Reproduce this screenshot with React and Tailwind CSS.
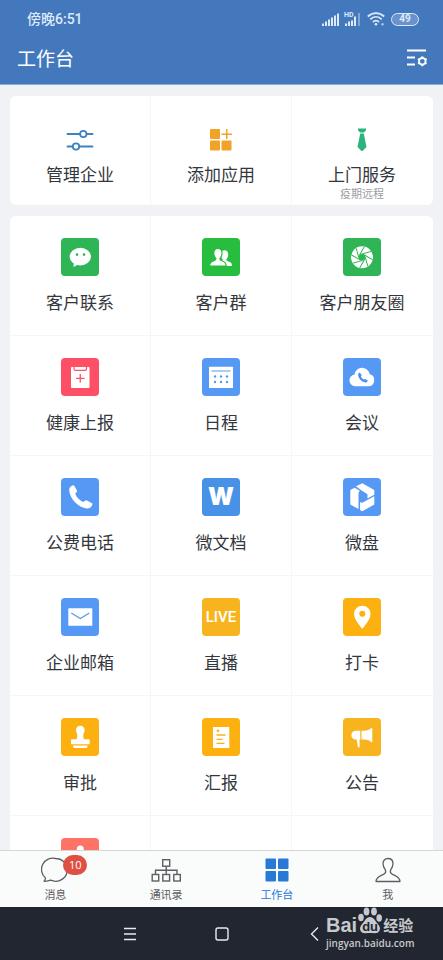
import React from "react";

function Tile({ color, children }) {
  return (
    <svg viewBox="0 0 38 38" className={`size-[38px] shrink-0 rounded ${color}`} fill="#fff" aria-hidden="true">
      {children}
    </svg>
  );
}

const PERSON =
  "M7.6 28c0-3 1-4 3.8-5 2-.8 2.6-1.200 2.600-2.200-1.500-1.500-2.200-3.500-2.200-5.800 0-2.900 1.700-4.600 4.100-4.600s4.100 1.700 4.100 4.600c0 2.300-.7 4.300-2.200 5.800 0 1 .6 1.400 2.600 2.200 2.800 1 3.800 2 3.800 5z";

function ChatIcon() {
  return (
    <Tile color="bg-[#2fb555]">
      <ellipse cx="19.300" cy="18.600" rx="10.700" ry="8.800" />
      <path d="M13 24l-.6 5 5-2.500z" />
      <circle cx="16" cy="16.600" r="1.300" fill="#2fb555" />
      <circle cx="23" cy="16.600" r="1.300" fill="#2fb555" />
    </Tile>
  );
}

function GroupIcon() {
  return (
    <Tile color="bg-[#27be3f]">
      <path d={PERSON} transform="translate(8.200 2.800) scale(.9)" />
      <path d={PERSON} stroke="#27be3f" strokeWidth="1.200" />
      <path d="M5 28h21v2H5z" fill="#27be3f" />
    </Tile>
  );
}

function MomentsIcon() {
  return (
    <Tile color="bg-[#2fb555]">
      <circle cx="19" cy="19.300" r="11" />
      <circle cx="19" cy="19.300" r="3.500" fill="#2fb555" />
      <g stroke="#2fb555" strokeWidth="1">
        {[0, 45, 90, 135, 180, 225, 270, 315].map((a) => (
          <path key={a} d="M19 16l9-2.500" transform={`rotate(${a} 19 19.300)`} />
        ))}
      </g>
    </Tile>
  );
}

function HealthIcon() {
  return (
    <Tile color="bg-[#fd5067]">
      <rect x="10" y="9" width="18.500" height="21" rx="1" />
      <path d="M13 8.500v2c0 1.200.7 1.900 1.900 1.900h8.700c1.200 0 1.900-.7 1.900-1.900v-2" fill="none" stroke="#fd5067" strokeWidth="1.200" />
      <path d="M19.250 16v8.600M14.950 20.300h8.600" stroke="#fd5067" strokeWidth="1.300" />
    </Tile>
  );
}

function CalendarIcon() {
  return (
    <Tile color="bg-[#5699f4]">
      <rect x="7" y="8.700" width="24" height="21.300" rx=".5" />
      <path d="M9.500 13h19" stroke="#5699f4" strokeWidth="1.200" />
      {[13, 19, 25].map((x) => (
        <g key={x} fill="#5699f4">
          <circle cx={x} cy="18.500" r="1.200" />
          <circle cx={x} cy="24" r="1.200" />
        </g>
      ))}
    </Tile>
  );
}

function MeetingIcon() {
  return (
    <Tile color="bg-[#5699f4]">
      <path d="M13 28.300a6 6 0 0 1-1.500-11.900 7.600 7.600 0 0 1 15-.3 6.200 6.200 0 0 1-1 12.200z" />
      <path d="M15.300 15.600l1.500-1 1.900 2.700-.8 1.200c.7 1.400 1.700 2.400 3.200 3.100l1.300-.7 2.500 1.900-1.200 1.500c-4.500 1-9.500-4.500-8.400-8.700z" fill="#4d8ff0" />
    </Tile>
  );
}

function PhoneIcon() {
  return (
    <Tile color="bg-[#5699f4]">
      <path d="M8.200 12c0-2.300 1.500-4 3.800-4.700.6-.2 1.100 0 1.400.6l2.500 4.500c.3.600.2 1-.2 1.500L14.200 15.700c1.600 3.800 4.400 6.500 7.800 8.300l2.500-1.600c.5-.3.900-.3 1.400 0l5 2.800c.6.3.8.8.5 1.400-.9 2.600-3 4.100-5.600 3.900C17.400 29.800 8.600 20.500 8.200 12z" />
    </Tile>
  );
}

function DriveIcon() {
  return (
    <Tile color="bg-[#5699f4]">
      <path d="M7.300 12l4.300-2.300 5.200 3-1.300 2V31l-8.200-4.600z" />
      <path d="M13 8.200l6.300-3 12 6.900v4.700L24.500 20.500v-4.300l-6.200-3.900z" />
      <path d="M31.300 18.300v8.100l-12 6.900-2.300-1.200v-7.800l2.300.4z" />
    </Tile>
  );
}

function MailIcon() {
  return (
    <Tile color="bg-[#5699f4]">
      <rect x="7.300" y="10.300" width="24" height="17.400" rx=".5" />
      <path d="M10.300 15l9 5.500 9-5.500" fill="none" stroke="#5699f4" strokeWidth="1.300" />
    </Tile>
  );
}

function PinIcon() {
  return (
    <Tile color="bg-[#fcb110]">
      <path fillRule="evenodd" d="M19.300 7.700a8.200 8.200 0 0 1 8.200 8.200c0 5-4.200 9.600-8.200 14.800-4-5.200-8.200-9.800-8.200-14.800a8.200 8.200 0 0 1 8.200-8.200zm0 5a3 3 0 1 0 0 6 3 3 0 0 0 0-6z" />
    </Tile>
  );
}

function StampIcon() {
  return (
    <Tile color="bg-[#fcb110]">
      <path d="M19.300 7.700c2.600 0 4.300 1.800 4.300 4.200 0 2.200-1.300 3.400-1.300 5.500 0 2 .3 3.600 1 3.800h4c.9 0 1.400.5 1.400 1.400v3.700H10v-3.700c0-.9.500-1.400 1.400-1.400h3.900c.7-.2 1-1.800 1-3.800 0-2.100-1.300-3.300-1.300-5.500 0-2.400 1.700-4.200 4.300-4.200z" />
      <path d="M11.800 27.600h15l-1 2.300h-13z" />
    </Tile>
  );
}

function ReportIcon() {
  return (
    <Tile color="bg-[#fcb110]">
      <rect x="11" y="9" width="16.300" height="21" />
      <circle cx="16" cy="12.700" r="1.300" fill="#fcb110" />
      <path d="M14.500 17h9M14.500 21.300h6M14.500 25.300h8" stroke="#fcb110" strokeWidth="1.300" />
    </Tile>
  );
}

function HornIcon() {
  return (
    <Tile color="bg-[#f7b41f]">
      <path d="M17.300 12.700v8.900h-.7v7.700h-1.700l-1.200-7.700h-.9a4.400 4.400 0 0 1 0-8.900z" />
      <path d="M18.500 12.700h2.500c3.500 0 6-1.300 7.500-2.700h.8v14.300h-.8c-1.500-1.400-4-2.700-7.500-2.700h-2.500z" />
    </Tile>
  );
}

function CoralIcon() {
  return (
    <Tile color="bg-[#fd7466]">
      <circle cx="19.300" cy="11" r="3.500" />
      <path d="M11 28c0-8 3-12 8.300-12s8.300 4 8.300 12z" />
    </Tile>
  );
}

function LetterTile({ color, text, children }) {
  return (
    <span className={`flex size-[38px] shrink-0 items-center justify-center rounded text-white ${color} ${text}`}>
      {children}
    </span>
  );
}

const APPS = [
  ["客户联系", <ChatIcon />],
  ["客户群", <GroupIcon />],
  ["客户朋友圈", <MomentsIcon />],
  ["健康上报", <HealthIcon />],
  ["日程", <CalendarIcon />],
  ["会议", <MeetingIcon />],
  ["公费电话", <PhoneIcon />],
  ["微文档", <LetterTile color="bg-[#4791e6]" text="font-['Inter',sans-serif] text-2xl font-black">W</LetterTile>],
  ["微盘", <DriveIcon />],
  ["企业邮箱", <MailIcon />],
  ["直播", <LetterTile color="bg-[#f7b41f]" text="font-['Roboto',sans-serif] text-[15px] font-medium">LIVE</LetterTile>],
  ["打卡", <PinIcon />],
  ["审批", <StampIcon />],
  ["汇报", <ReportIcon />],
  ["公告", <HornIcon />],
  ["", <CoralIcon />],
  ["", null],
  ["", null],
];

function SignalIcon() {
  return (
    <svg viewBox="0 0 17 13" className="h-[13px] w-[17px]" fill="#dceafb" aria-hidden="true">
      <path d="M0 10.500h2V13H0zM3 8.500h2V13H3zM6 6.500h2V13H6zM9 4.500h2V13H9zM12 2.500h2V13h-2zM15 .5h2V13h-2z" />
    </svg>
  );
}

function StatusBar() {
  return (
    <div className="flex h-[38px] items-center justify-between pr-6 pl-[27px] text-[#dceafb]">
      <span className="font-['Roboto','Noto_Sans_CJK_SC',sans-serif] text-sm font-medium">傍晚6:51</span>
      <div className="flex items-center gap-[5px]">
        <SignalIcon />
        <div className="relative h-[13px] w-4">
          <svg viewBox="0 0 16 13" className="h-[13px] w-4" fill="#dceafb" aria-hidden="true">
            <path d="M1 10.500h2V13H1zM4 8.500h2V13H4zM7 7.500h2V13H7zM10 3.500h2V13h-2z" />
            <path d="M14 0h2v13h-2z" opacity=".4" />
          </svg>
          <span className="absolute -top-px left-0 font-['Roboto',sans-serif] text-[7px] leading-[6px] font-bold">HD</span>
        </div>
        <svg viewBox="0 0 18 14" className="ml-0.5 h-3.5 w-[18px]" fill="none" stroke="#dceafb" strokeWidth="1.800" aria-hidden="true">
          <path d="M.8 4.500c5-4.500 11.400-4.500 16.400 0M3.300 7.300c3.400-3.200 8-3.200 11.400 0M5.900 10c2-1.800 4.200-1.800 6.200 0" />
          <circle cx="9" cy="12.300" r="1.300" fill="#dceafb" stroke="none" />
          <circle cx="15.500" cy="12.300" r="1.200" fill="#dceafb" stroke="none" opacity=".7" />
        </svg>
        <span className="ml-px flex h-[13px] w-7 items-center justify-center rounded-full border border-[#dceafb] bg-white/20 font-['Roboto',sans-serif] text-[10px] leading-none font-bold">
          49
        </span>
      </div>
    </div>
  );
}

function Header() {
  return (
    <header className="h-[85px] shrink-0 border-b border-[#8caeda] bg-[#4478bd]">
      <StatusBar />
      <div className="flex h-10 items-center justify-between pr-[15px] pl-[17px]">
        <h1 className="text-[19px] text-white">工作台</h1>
        <button type="button" aria-label="设置" className="text-white">
          <svg viewBox="0 0 22 18" className="h-[18px] w-[22px]" fill="none" stroke="currentColor" strokeWidth="2">
            <path d="M1 1.500h19M1 8.500h8M1 15.500h8" />
            <circle cx="16.300" cy="12.300" r="3.300" strokeWidth="1.800" />
            <g strokeWidth="2">
              {[30, 90, 150, 210, 270, 330].map((a) => (
                <path key={a} d="M19.800 12.300h1.400" transform={`rotate(${a} 16.300 12.300)`} />
              ))}
            </g>
          </svg>
        </button>
      </div>
    </header>
  );
}

const CELL = "flex flex-col items-center border-r border-[#f5f6f8] nth-[3n]:border-r-transparent";

function QuickActions() {
  return (
    <section className="grid h-[109px] shrink-0 grid-cols-3 rounded-md bg-white">
      <button type="button" className={`${CELL} pt-[31px]`}>
        <svg viewBox="0 0 28 24" className="h-6 w-7" fill="none" stroke="#3d80c3" strokeWidth="1.800" strokeLinecap="round" aria-hidden="true">
          <path d="M1.500 7h12.300M20.800 7h5.700M1.500 19.500h5M13.500 19.500h13" />
          <circle cx="17.300" cy="7" r="3.200" />
          <circle cx="10" cy="19.500" r="3.200" />
        </svg>
        <span className="mt-2.5 text-[17px] leading-[26px]">管理企业</span>
      </button>
      <button type="button" className={`${CELL} pt-[31px]`}>
        <svg viewBox="0 0 24 24" className="size-6" fill="#f0a327" aria-hidden="true">
          <rect x="1" y="2" width="10" height="10" rx="1" />
          <rect x="1" y="13.500" width="10" height="10" rx="1" />
          <rect x="12.500" y="13.500" width="10" height="10" rx="1" />
          <path d="M17 2h1.500v4.500H23V8h-4.500v4H17V8h-4.500V6.500H17z" />
        </svg>
        <span className="mt-2.5 text-[17px] leading-[26px]">添加应用</span>
      </button>
      <button type="button" className={`${CELL} pt-[31px]`}>
        <svg viewBox="0 0 24 24" className="size-6" fill="#2bb47c" aria-hidden="true">
          <path d="M8 1.500h8v1.800L14 5.500h-4L8 3.300zM10.200 6.500h3.600l2.700 13.500-4.500 4.500L7.500 20z" />
        </svg>
        <span className="mt-2.5 text-[17px] leading-[26px]">上门服务</span>
        <span className="text-[11px] leading-3 text-[#9a9da3]">疫期远程</span>
      </button>
    </section>
  );
}

function AppGrid() {
  return (
    <section className="grid shrink-0 grid-cols-3 rounded-t-md bg-white">
      {APPS.map(([name, icon], i) => (
        <button
          key={i}
          type="button"
          aria-label={name || "应用"}
          className={`${CELL} h-[120px] border-b pt-[22px]`}
        >
          {icon}
          {name && <span className="mt-[13px] text-[17px] leading-[26px]">{name}</span>}
        </button>
      ))}
    </section>
  );
}

function TabBar() {
  return (
    <nav className="grid h-[57px] shrink-0 grid-cols-4 border-t border-[#d4d6d8] bg-[#fafbfb] text-[11px] text-[#5c5e62]">
      <a href="#messages" className="flex flex-col items-center pt-[5px]">
        <span className="relative">
          <svg viewBox="0 0 28 28" className="size-7" fill="none" stroke="#5c5e62" strokeWidth="1.300" strokeLinejoin="round" aria-hidden="true">
            <path d="M3 25.200c1-.8 1.500-2 1.400-3.200A11.300 11.300 0 0 1 14.500 2.500c6.500 0 11.700 5 11.700 11.400s-5.200 11.400-11.700 11.400c-1.900 0-3.400-.5-5-1.100-2 .8-4.200 1.300-6.500 1z" />
          </svg>
          <span className="absolute -top-px left-[22px] flex h-5 w-6 items-center justify-center rounded-full bg-[#dd5042] font-['Open_Sans',sans-serif] text-[11px] text-white">
            10
          </span>
        </span>
        <span className="mt-0.5 leading-4">消息</span>
      </a>
      <a href="#contacts" className="flex flex-col items-center pt-[5px]">
        <svg viewBox="0 0 32 28" className="h-7 w-8" fill="none" stroke="#5c5e62" strokeWidth="1.400" aria-hidden="true">
          <rect x="12.700" y="3.700" width="7" height="6.500" />
          <rect x="2.200" y="18.500" width="6.500" height="6.500" />
          <rect x="12.800" y="18.500" width="6.800" height="6.500" />
          <rect x="23.800" y="18.500" width="6.500" height="6.500" />
          <path d="M16.200 10.200v8.300M5.500 18.500v-4.200H27v4.200" />
        </svg>
        <span className="mt-0.5 leading-4">通讯录</span>
      </a>
      <a href="#workbench" aria-current="page" className="flex flex-col items-center pt-[5px] text-[#2878d8]">
        <svg viewBox="0 0 28 28" className="size-7" fill="#2878d8" aria-hidden="true">
          <rect x="2.500" y="2.500" width="10.500" height="10.500" rx="1" />
          <rect x="15" y="2.500" width="10.500" height="10.500" rx="1" />
          <rect x="2.500" y="15" width="10.500" height="10.500" rx="1" />
          <rect x="15" y="15" width="10.500" height="10.500" rx="1" />
        </svg>
        <span className="mt-0.5 leading-4">工作台</span>
      </a>
      <a href="#me" className="flex flex-col items-center pt-[5px]">
        <svg viewBox="0 0 28 28" className="size-7" fill="none" stroke="#5c5e62" strokeWidth="1.300" strokeLinejoin="round" aria-hidden="true">
          <path d="M14 2.500c3.200 0 5 2.300 5 5.300 0 2.700-1 4.200-2.200 5.800-.8 1.800-.5 3.300.7 4.100 3 2 8.500 2.800 8.500 7.800H2c0-5 5.500-5.800 8.500-7.800 1.200-.8 1.500-2.300.7-4.100C10 12 9 10.500 9 7.800c0-3 1.800-5.300 5-5.300z" />
        </svg>
        <span className="mt-0.5 leading-4">我</span>
      </a>
    </nav>
  );
}

function Watermark() {
  return (
    <div className="absolute -top-px right-7 w-[89px] text-[#c6c9cd]">
      <div className="flex h-7 items-end">
        <span className="font-['Liberation_Sans',sans-serif] text-xl leading-[18px] font-bold">Bai</span>
        <span className="relative">
          <svg viewBox="0 0 26 28" className="h-7 w-[26px]" fill="currentColor" aria-hidden="true">
            <ellipse cx="4" cy="11.500" rx="2.800" ry="3.700" />
            <ellipse cx="9.500" cy="5.500" rx="2.900" ry="4" />
            <ellipse cx="17" cy="5.500" rx="2.900" ry="4" />
            <ellipse cx="22.200" cy="12" rx="2.800" ry="3.700" />
            <path d="M13 11c4 0 5 4 7.500 6.500 4.500 4.500 2.500 10-3 9.800-3-.3-6-.3-9 0-5.500.2-7.500-5.300-3-9.800C8 15 9 11 13 11z" />
          </svg>
          <span className="absolute inset-x-0 bottom-0 text-center font-['Liberation_Sans',sans-serif] text-[13px] leading-[14px] font-bold text-[#222630]">du</span>
        </span>
        <span className="text-[15px] leading-[18px] font-bold">经验</span>
      </div>
      <div className="mt-px font-['Open_Sans',sans-serif] text-[10px] leading-4 font-semibold">jingyan.baidu.com</div>
    </div>
  );
}

function SystemNav() {
  return (
    <div className="relative grid h-[53px] shrink-0 grid-cols-[1fr_92px_92px_1fr] items-center bg-[#222630] text-[#e8ebee]">
      <button type="button" aria-label="菜单" className="mr-[-8px] justify-self-end">
        <svg viewBox="0 0 16 16" className="size-4" fill="none" stroke="currentColor" strokeWidth="1.400">
          <path d="M2 2.500h12M2 8h12M2 13.500h12" />
        </svg>
      </button>
      <button type="button" aria-label="主页" className="mr-[-8px] justify-self-end">
        <svg viewBox="0 0 16 16" className="size-4" fill="none" stroke="currentColor" strokeWidth="1.400">
          <rect x="2" y="2" width="12" height="12" rx="2" />
        </svg>
      </button>
      <button type="button" aria-label="返回" className="mr-[-8px] justify-self-end">
        <svg viewBox="0 0 16 16" className="size-4" fill="none" stroke="currentColor" strokeWidth="1.400">
          <path d="M12 1.500L5.500 8l6.500 6.500" />
        </svg>
      </button>
      <Watermark />
    </div>
  );
}

export default function App() {
  return (
    <div className="flex h-screen flex-col bg-[#f0f2f5] font-['Noto_Sans_CJK_SC',sans-serif] text-[#33373d]">
      <Header />
      <main className="flex min-h-0 flex-1 flex-col gap-[11px] overflow-y-auto px-2.5 pt-[11px] [scrollbar-width:none]">
        <QuickActions />
        <AppGrid />
      </main>
      <TabBar />
      <SystemNav />
    </div>
  );
}
